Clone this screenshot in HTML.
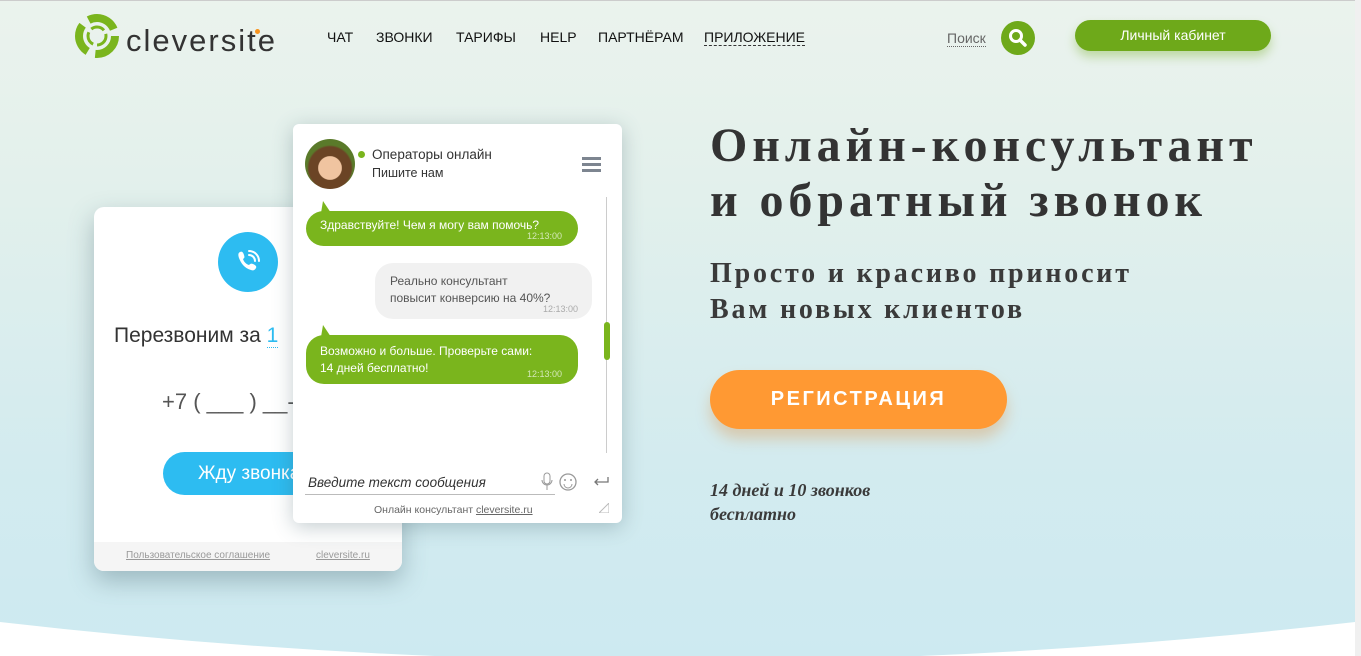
<!DOCTYPE html>
<html><head><meta charset="utf-8">
<style>
*{margin:0;padding:0;box-sizing:border-box}
body{width:1361px;height:656px;overflow:hidden;position:relative;font-family:"Liberation Sans",sans-serif;background:linear-gradient(#ebf3ed 0%,#e2f0ec 30%,#d3ebef 70%,#cdeaf1 100%)}
.abs{position:absolute}
.nav a{position:absolute;top:29px;font-size:14px;color:#111;text-decoration:none}
.h1{left:710px;top:118px;font:bold 48px/55px "Liberation Serif","DejaVu Serif",serif;color:#333;letter-spacing:4.9px;white-space:nowrap}
.h2{left:710px;top:256px;font:bold 28px/36px "Liberation Serif","DejaVu Serif",serif;color:#3a3a3a;letter-spacing:2.8px;white-space:nowrap}
.card{left:94px;top:207px;width:308px;height:364px;background:#fff;border-radius:10px;box-shadow:0 10px 25px rgba(60,90,100,.35);overflow:hidden}
.chat{left:293px;top:124px;width:329px;height:399px;background:#fff;border-radius:6px;box-shadow:0 4px 20px rgba(60,90,100,.3)}
.bub{position:absolute;border-radius:18px;font-size:12px;line-height:17px}
.g{background:#7ab51d;color:#fff}
.t{position:absolute;right:16px;bottom:1px;font-size:9px;color:#d4e8b8}
</style></head><body>
<div class="abs" style="left:0;top:0;width:1355px;height:1px;background:#ccc"></div>
<div class="abs" style="right:0;top:0;width:6px;height:656px;background:#f0f0f0"></div>
<svg class="abs" style="left:74px;top:13px" width="46" height="46" viewBox="0 0 46 46">
<circle cx="23" cy="23" r="18" fill="none" stroke="#7ab51d" stroke-width="8" stroke-dasharray="30 8"/>
<circle cx="23" cy="23" r="9" fill="none" stroke="#7ab51d" stroke-width="3" stroke-dasharray="14 4"/>
</svg>
<div class="abs" style="left:126px;top:21px;font-size:31px;color:#333;line-height:40px;letter-spacing:2px">cleversite</div>
<div class="abs" style="left:255px;top:29px;width:5px;height:5px;border-radius:50%;background:#f7931e"></div>
<div class="nav">
<a style="left:327px">ЧАТ</a><a style="left:376px">ЗВОНКИ</a><a style="left:456px">ТАРИФЫ</a><a style="left:540px">HELP</a><a style="left:598px">ПАРТНЁРАМ</a><a style="left:704px;border-bottom:1px dashed #333">ПРИЛОЖЕНИЕ</a>
</div>
<div class="abs" style="left:947px;top:30px;font-size:14px;color:#666;border-bottom:1px dotted #666">Поиск</div>
<div class="abs" style="left:1001px;top:21px;width:34px;height:34px;border-radius:50%;background:#6ea91a"></div>
<svg class="abs" style="left:1008px;top:28px" width="20" height="20"><circle cx="8" cy="8" r="5.5" fill="none" stroke="#fff" stroke-width="3"/><path d="M12 12l5 5" stroke="#fff" stroke-width="3.5" stroke-linecap="round"/></svg>
<div class="abs" style="left:1075px;top:20px;width:196px;height:31px;border-radius:16px;background:#6ea91a;color:#fff;font-size:14px;text-align:center;line-height:31px;box-shadow:0 6px 10px rgba(110,169,26,.35)">Личный кабинет</div>

<div class="abs h1">Онлайн-консультант<br>и обратный звонок</div>
<div class="abs h2">Просто и красиво приносит<br>Вам новых клиентов</div>
<div class="abs" style="left:710px;top:370px;width:297px;height:59px;border-radius:30px;background:#ff9933;color:#fff;font-weight:bold;font-size:20px;letter-spacing:2.5px;text-align:center;line-height:59px;box-shadow:0 10px 14px rgba(220,140,60,.35)">РЕГИСТРАЦИЯ</div>
<div class="abs" style="left:710px;top:478px;font:bold italic 18px/24px 'Liberation Serif',serif;color:#3a3a3a">14 дней и 10 звонков<br>бесплатно</div>

<div class="abs card">
<div class="abs" style="left:124px;top:25px;width:60px;height:60px;border-radius:50%;background:#2dbcf1"></div>
<svg class="abs" style="left:140px;top:41px" width="28" height="28" viewBox="0 0 28 28"><path d="M6 4c2-1 3 0 4 3s0 3-1 4c1 3 3 5 6 6 1-1 2-2 4-1s4 2 3 4-3 3-5 2C10 20 7 15 5 10 4 7 4 5 6 4z" fill="#fff"/><path d="M15 7a6 6 0 0 1 6 6M15 3a10 10 0 0 1 10 10" stroke="#fff" stroke-width="2" fill="none" stroke-linecap="round"/></svg>
<div class="abs" style="left:20px;top:117px;font-size:21px;color:#333">Перезвоним за <span style="color:#2dbcf1;border-bottom:1px dotted #2dbcf1">1</span></div>
<div class="abs" style="left:68px;top:182px;font-size:22px;color:#555;font-weight:300">+7 ( ___ ) __-__</div>
<div class="abs" style="left:69px;top:245px;width:220px;height:43px;border-radius:22px;background:#2dbcf1;color:#fff;font-size:19px;line-height:43px;padding-left:35px">Жду звонка</div>
<div class="abs" style="left:0;top:335px;width:308px;height:29px;background:#f5f5f5"></div>
<div class="abs" style="left:32px;top:343px;font-size:10px;color:#999;text-decoration:underline">Пользовательское соглашение</div>
<div class="abs" style="left:222px;top:343px;font-size:10px;color:#999;text-decoration:underline">cleversite.ru</div>
</div>

<div class="abs chat">
<div class="abs" style="left:12px;top:15px;width:50px;height:50px;border-radius:50%;background:radial-gradient(circle at 50% 58%,#f0c4a0 0 30%,#6b4425 32% 55%,#5a7a2a 60%)"></div>
<div class="abs" style="left:65px;top:27px;width:7px;height:7px;border-radius:50%;background:#7ab51d"></div>
<div class="abs" style="left:79px;top:23px;font-size:13.5px;color:#333">Операторы онлайн</div>
<div class="abs" style="left:79px;top:42px;font-size:12.5px;color:#333">Пишите нам</div>
<div class="abs" style="left:289px;top:33px;width:19px;height:3px;background:#7d8590;box-shadow:0 6px 0 #7d8590,0 12px 0 #7d8590"></div>
<div class="abs" style="left:313px;top:73px;width:1px;height:256px;background:#ccc"></div>
<div class="abs" style="left:311px;top:198px;width:6px;height:38px;border-radius:3px;background:#7ab51d"></div>
<div class="bub g" style="left:13px;top:87px;width:272px;height:35px;padding:6px 14px">Здравствуйте! Чем я могу вам помочь?<span class="t">12:13:00</span></div>
<svg class="abs" style="left:26px;top:77px" width="12" height="12"><path d="M2 12L4 0 12 12z" fill="#7ab51d"/></svg>
<div class="bub" style="left:82px;top:139px;width:217px;height:56px;background:#f1f1f1;color:#555;padding:10px 15px">Реально консультант<br>повысит конверсию на 40%?<span class="t" style="color:#aaa;right:14px">12:13:00</span></div>
<div class="bub g" style="left:13px;top:211px;width:272px;height:49px;padding:8px 14px">Возможно и больше. Проверьте сами:<br>14 дней бесплатно!<span class="t">12:13:00</span></div>
<svg class="abs" style="left:26px;top:201px" width="12" height="12"><path d="M2 12L4 0 12 12z" fill="#7ab51d"/></svg>
<div class="abs" style="left:15px;top:351px;font-size:13.5px;font-style:italic;color:#333">Введите текст сообщения</div>
<div class="abs" style="left:12px;top:370px;width:250px;height:1px;background:#bbb"></div>
<svg class="abs" style="left:248px;top:348px" width="42" height="20"><rect x="3" y="1" width="6" height="11" rx="3" fill="none" stroke="#999"/><path d="M1 8a5 5 0 0 0 10 0M6 13v5" stroke="#999" fill="none"/><circle cx="27" cy="10" r="8" fill="none" stroke="#999" stroke-width="1.3"/><circle cx="24" cy="8" r="1" fill="#999"/><circle cx="30" cy="8" r="1" fill="#999"/><path d="M23 12a4 4 0 0 0 8 0" stroke="#999" fill="none"/></svg>
<svg class="abs" style="left:300px;top:352px" width="16" height="10"><path d="M15 1v5H2M5 3L2 6l3 3" stroke="#777" fill="none" stroke-width="1.3"/></svg>
<div class="abs" style="left:81px;top:380px;font-size:10.5px;color:#666">Онлайн консультант <span style="text-decoration:underline">cleversite.ru</span></div>
<svg class="abs" style="left:306px;top:379px" width="10" height="10"><path d="M0 10L10 0v10z" fill="none" stroke="#bbb"/></svg>
</div>

<svg class="abs" style="left:0;top:610px" width="1355" height="46"><path d="M0 12Q677 90 1355 12V46H0z" fill="#fff"/></svg>
</body></html>
